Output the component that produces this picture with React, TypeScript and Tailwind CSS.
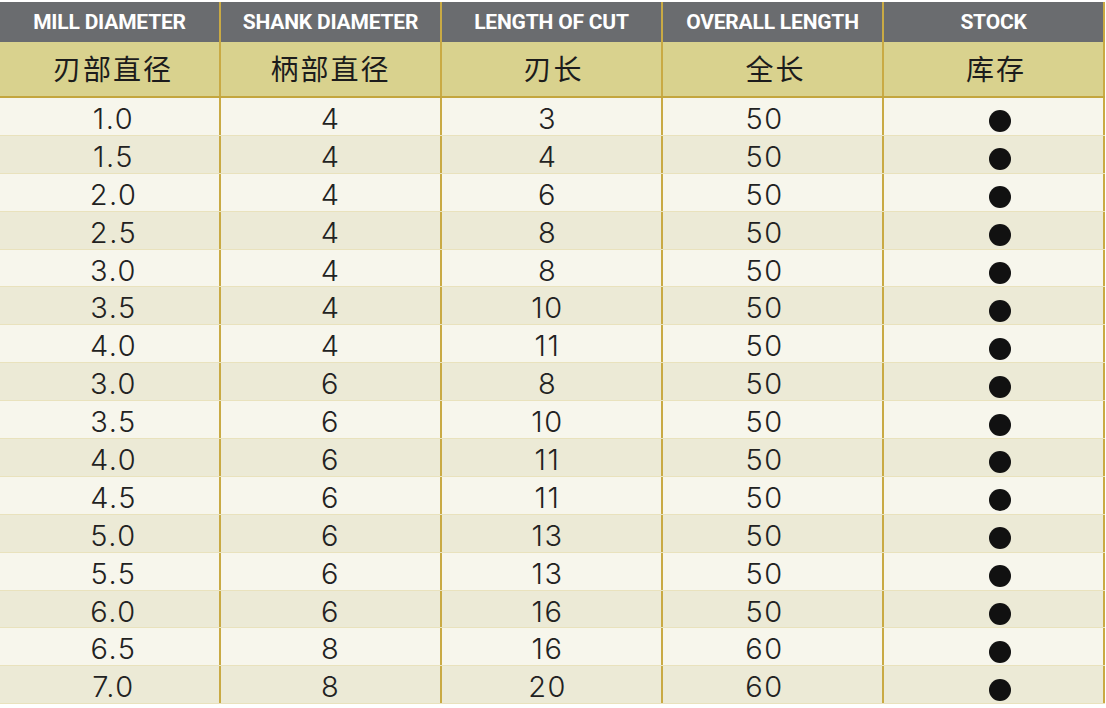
const columns = [
  { en: "MILL DIAMETER", zh: "刃部直径", zs: "pl-[7px]" },
  { en: "SHANK DIAMETER", zh: "柄部直径", zs: "" },
  { en: "LENGTH OF CUT", zh: "刃长", zs: "pl-[4px]" },
  { en: "OVERALL LENGTH", zh: "全长", zs: "pl-[6px]" },
  { en: "STOCK", zh: "库存", zs: "pl-[5px]" },
];

const rows: [string, string, string, string][] = [
  ["1.0", "4", "3", "50"],
  ["1.5", "4", "4", "50"],
  ["2.0", "4", "6", "50"],
  ["2.5", "4", "8", "50"],
  ["3.0", "4", "8", "50"],
  ["3.5", "4", "10", "50"],
  ["4.0", "4", "11", "50"],
  ["3.0", "6", "8", "50"],
  ["3.5", "6", "10", "50"],
  ["4.0", "6", "11", "50"],
  ["4.5", "6", "11", "50"],
  ["5.0", "6", "13", "50"],
  ["5.5", "6", "13", "50"],
  ["6.0", "6", "16", "50"],
  ["6.5", "8", "16", "60"],
  ["7.0", "8", "20", "60"],
];

const enFont = { fontFamily: '"Liberation Sans Narrow", "Roboto", "Liberation Sans", sans-serif' };
const zhFont = { fontFamily: '"Noto Sans CJK SC", "Noto Sans", sans-serif' };
const numFont = { fontFamily: 'Inter, "DejaVu Sans", sans-serif' };

const cell = "flex items-center justify-center border-r-2 border-[#c9aa44]";
// the printed numbers sit a little off centre in some columns
const numShift = ["pl-[8px]", "", "pr-[8px]", "pr-[16px]"];

export default function App() {
  return (
    <div className="w-[1106px] h-[708px] overflow-hidden bg-white pt-[2px]">
      <div className="w-[1105px]">
        {/* english header */}
        <div className="grid grid-cols-5 h-[40px] bg-[#6a6c6f]">
          {columns.map((c) => (
            <div key={c.en} className={cell}>
              <span
                className="text-white text-[21px] font-bold tracking-[-0.2px] leading-none"
                style={enFont}
              >
                {c.en}
              </span>
            </div>
          ))}
        </div>
        {/* chinese header */}
        <div className="grid grid-cols-5 h-[56px] bg-[#d9d28e] border-b-2 border-[#c4a63e]">
          {columns.map((c) => (
            <div key={c.zh} className={cell + " " + c.zs}>
              <span className="text-[#1c1c1c] text-[28px] tracking-[2px] leading-none pb-[2px]" style={zhFont}>
                {c.zh}
              </span>
            </div>
          ))}
        </div>
        {/* body */}
        {rows.map((r, i) => (
          <div
            key={i}
            className={
              "grid grid-cols-5 h-[37.9px] border-b border-[#e9e2bd] " +
              (i % 2 === 0 ? "bg-[#f7f6ec]" : "bg-[#ecead6]")
            }
          >
            {r.map((v, j) => (
              <div key={j} className={cell + " pt-[4px] " + numShift[j]}>
                <span className="text-[#222] text-[29px] font-light tracking-[1.5px] leading-none" style={numFont}>
                  {v}
                </span>
              </div>
            ))}
            <div className={cell}>
              <span className="block w-[22px] h-[22px] rounded-full bg-[#111] mt-[10px] ml-[12px]" />
            </div>
          </div>
        ))}
      </div>
    </div>
  );
}
